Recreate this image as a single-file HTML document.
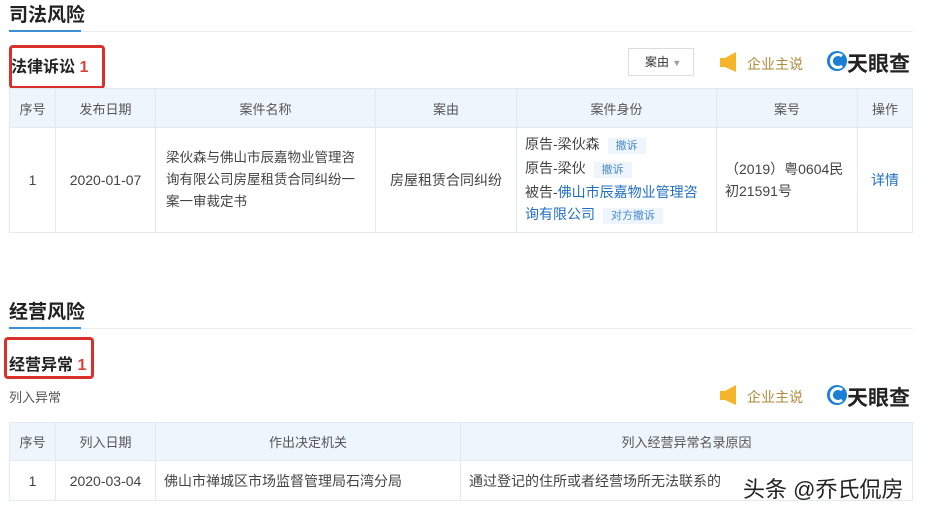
<!DOCTYPE html>
<html><head><meta charset="utf-8"><style>
body{margin:0;width:930px;height:513px;background:#fff;font-family:"Liberation Sans","Noto Sans CJK SC",sans-serif;color:#333;position:relative;overflow:hidden}
.a{position:absolute}
.h1{font-size:19px;font-weight:bold;color:#222}
.ul{height:2px;background:#3d8fd6}
.ln{height:1px;background:#eaedf0}
.rb{border:3px solid #d8302a;border-radius:4px;box-sizing:border-box}
.h2{font-size:16px;font-weight:bold;color:#222}
.h2 b{color:#d8453a}
table{border-collapse:collapse;font-size:14px;color:#444;position:absolute}
td,th{border:1px solid #e4e9ee;text-align:center;font-weight:normal;padding:0}
th{background:#eef5fc;color:#555;font-size:13px}
.tag{background:#eef5fc;color:#4a8ad0;font-size:11px;padding:2px 8px;margin-left:8px}
.lk{color:#1f6fc2}
.brand{font-size:21px;font-weight:bold;color:#222}
.say{font-size:14px;color:#b08a3a}
</style></head><body>
<div class="a h1" style="left:9px;top:0px">司法风险</div>
<div class="a ln" style="left:9px;top:31px;width:904px"></div>
<div class="a ul" style="left:9px;top:30px;width:72px"></div>
<div class="a rb" style="left:9px;top:45px;width:96px;height:44px"></div>
<div class="a h2" style="left:11px;top:53px">法律诉讼 <b>1</b></div>
<div class="a" style="left:628px;top:48px;width:66px;height:28px;border:1px solid #ddd;box-sizing:border-box;font-size:12px;line-height:26px;padding-left:16px">案由 <span style="color:#999;font-size:9px">▼</span></div>
<svg class="a" style="left:719px;top:51px" width="22" height="22"><rect x="1" y="7" width="6" height="9" fill="#f5b52a"/><path d="M6 7 L17 1 L17 21 L6 16Z" fill="#f5b52a"/></svg>
<div class="a say" style="left:747px;top:54px">企业主说</div>
<svg class="a" style="left:826px;top:50px" width="22" height="22"><circle cx="11" cy="11" r="10" fill="#1b7fd3"/><path d="M16 6 A6.5 6.5 0 1 0 16 16" stroke="#fff" stroke-width="3" fill="none"/></svg>
<div class="a brand" style="left:847px;top:48px">天眼查</div>
<table style="left:9px;top:88px;width:904px">
<tr style="height:39px"><th style="width:45px">序号</th><th style="width:99px">发布日期</th><th style="width:219px">案件名称</th><th style="width:140px">案由</th><th style="width:199px">案件身份</th><th style="width:140px">案号</th><th>操作</th></tr>
<tr style="height:105px"><td>1</td><td>2020-01-07</td><td style="text-align:left;padding:0 10px;line-height:22px;font-size:13.5px">梁伙森与佛山市辰嘉物业管理咨询有限公司房屋租赁合同纠纷一案一审裁定书</td><td>房屋租赁合同纠纷</td><td style="text-align:left;padding:0 8px;line-height:22px">原告-梁伙森<span class="tag">撤诉</span><br>原告-梁伙<span class="tag">撤诉</span><br>被告-<span class="lk">佛山市辰嘉物业管理咨询有限公司</span><span class="tag">对方撤诉</span></td><td style="text-align:left;padding:0 8px;line-height:22px">（2019）粤0604民初21591号</td><td class="lk" style="color:#1f6fc2">详情</td></tr>
</table>
<div class="a h1" style="left:9px;top:297px">经营风险</div>
<div class="a ln" style="left:9px;top:328px;width:904px"></div>
<div class="a ul" style="left:9px;top:327px;width:72px"></div>
<div class="a rb" style="left:4px;top:337px;width:90px;height:42px"></div>
<div class="a h2" style="left:9px;top:351px">经营异常 <b>1</b></div>
<div class="a" style="left:9px;top:387px;font-size:13px;color:#555">列入异常</div>
<svg class="a" style="left:719px;top:384px" width="22" height="22"><rect x="1" y="7" width="6" height="9" fill="#f5b52a"/><path d="M6 7 L17 1 L17 21 L6 16Z" fill="#f5b52a"/></svg>
<div class="a say" style="left:747px;top:387px">企业主说</div>
<svg class="a" style="left:826px;top:384px" width="22" height="22"><circle cx="11" cy="11" r="10" fill="#1b7fd3"/><path d="M16 6 A6.5 6.5 0 1 0 16 16" stroke="#fff" stroke-width="3" fill="none"/></svg>
<div class="a brand" style="left:847px;top:382px">天眼查</div>
<table style="left:9px;top:422px;width:904px">
<tr style="height:38px"><th style="width:45px">序号</th><th style="width:99px">列入日期</th><th style="width:304px">作出决定机关</th><th>列入经营异常名录原因</th></tr>
<tr style="height:40px"><td>1</td><td>2020-03-04</td><td style="text-align:left;padding-left:8px">佛山市禅城区市场监督管理局石湾分局</td><td style="text-align:left;padding-left:8px">通过登记的住所或者经营场所无法联系的</td></tr>
</table>
<div class="a" style="left:743px;top:472px;font-size:22px;color:#222;text-shadow:0 0 2px #fff">头条 @乔氏侃房</div>
</body></html>
